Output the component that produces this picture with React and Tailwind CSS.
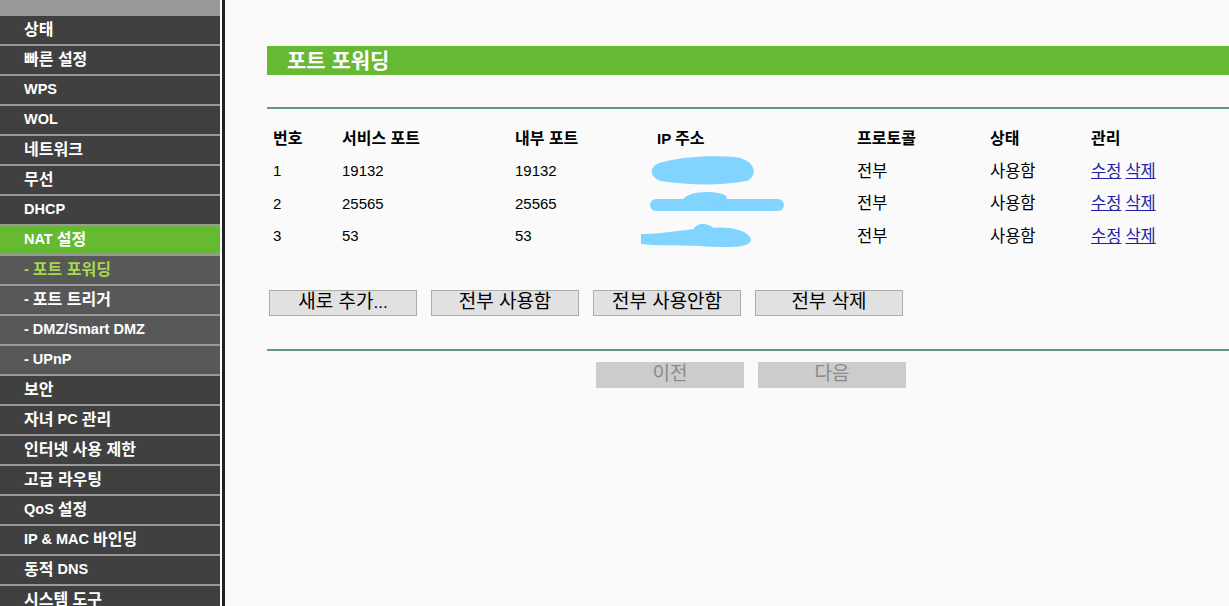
import React from 'react';

const menu = [
  { label: '상태' },
  { label: '빠른 설정' },
  { label: 'WPS' },
  { label: 'WOL' },
  { label: '네트워크' },
  { label: '무선' },
  { label: 'DHCP' },
  { label: 'NAT 설정', active: true },
  { label: '- 포트 포워딩', sub: true, current: true },
  { label: '- 포트 트리거', sub: true },
  { label: '- DMZ/Smart DMZ', sub: true },
  { label: '- UPnP', sub: true },
  { label: '보안' },
  { label: '자녀 PC 관리' },
  { label: '인터넷 사용 제한' },
  { label: '고급 라우팅' },
  { label: 'QoS 설정' },
  { label: 'IP & MAC 바인딩' },
  { label: '동적 DNS' },
  { label: '시스템 도구' },
];

const rows = [
  { no: 1, svc: '19132', inner: '19132' },
  { no: 2, svc: '25565', inner: '25565' },
  { no: 3, svc: '53', inner: '53' },
];

const font = { fontFamily: '"Liberation Sans", "Noto Sans CJK KR", sans-serif' };

// hangul in the original font runs wider than Noto's, so bump just those runs
function K({ children, cls }) {
  const parts = String(children).split(/([\uAC00-\uD7A3]+(?:\s+[\uAC00-\uD7A3]+)*)/);
  return parts.map((p, i) =>
    /[\uAC00-\uD7A3]/.test(p) ? (
      <span key={i} className={cls}>
        {p}
      </span>
    ) : (
      p
    )
  );
}

function Blob({ n }) {
  // redaction scribble over the IP address
  if (n === 1)
    return (
      <svg className="absolute left-[-8px] top-[-16px]" width="110" height="32" viewBox="0 0 110 32">
        <path d="M10 8 C30 2 60 0 85 2 C106 4 110 20 98 26 C70 31 40 30 12 26 C0 22 0 12 10 8 Z" fill="#80d4ff" />
      </svg>
    );
  if (n === 2)
    return (
      <svg className="absolute left-[-9px] top-[-14px]" width="140" height="28" viewBox="0 0 140 28">
        <path d="M8 15 L130 15" stroke="#80d4ff" strokeWidth="12" strokeLinecap="round" />
        <path d="M34 12 C36 0 70 0 78 6 C84 16 60 24 40 20 Z" fill="#80d4ff" />
      </svg>
    );
  return (
    <svg className="absolute left-[-18px] top-[-14px]" width="120" height="28" viewBox="0 0 120 28">
      <path d="M2 12 C30 12 50 6 70 6 C92 4 108 8 112 17 C113 26 90 26 60 24 C35 23 15 24 2 22 Z" fill="#80d4ff" />
      <path d="M54 8 C58 -1 72 1 76 8 Z" fill="#80d4ff" />
    </svg>
  );
}

export default function App() {
  return (
    <div className="flex h-[606px] w-[1229px] overflow-hidden bg-[#fafafa]" style={font}>
      <div className="w-[220px] shrink-0 bg-[#999999] flex flex-col">
        <div className="h-[16px] shrink-0" />
        {menu.map((m) => (
          <div
            key={m.label}
            className={
              'h-[28px] shrink-0 mb-[2px] flex items-center pl-[24px] text-[14.5px] font-bold whitespace-pre ' +
              (m.active
                ? 'bg-[#66b933] text-white'
                : m.sub
                ? 'bg-[#585858] ' + (m.current ? 'text-[#a6d74c]' : 'text-white')
                : 'bg-[#404040] text-white')
            }
          >
            <K cls="text-[16px]">{m.label}</K>
          </div>
        ))}
      </div>
      <div className="w-[2px] shrink-0 bg-white" />
      <div className="w-[3px] shrink-0 bg-[#222222]" />

      <div className="flex-1 pl-[42px] pt-[46px] min-w-0">
        <div className="h-[29px] bg-[#66b933] flex items-center pl-[20px] text-[21px] font-bold text-white">
          포트 포워딩
        </div>
        <div className="mt-[32px] h-[2px] bg-[#5f9c7a]" />

        <div className="mt-[13px] pl-[6px] text-[15px] text-black">
          <div className="grid grid-cols-[69px_173px_142px_200px_133px_101px_1fr] h-[33px] items-center font-bold">
            <div><K cls="text-[16px]">번호</K></div>
            <div><K cls="text-[16px]">서비스 포트</K></div>
            <div><K cls="text-[16px]">내부 포트</K></div>
            <div>IP <K cls="text-[16px]">주소</K></div>
            <div><K cls="text-[16px]">프로토콜</K></div>
            <div><K cls="text-[16px]">상태</K></div>
            <div><K cls="text-[16px]">관리</K></div>
          </div>
          {rows.map((r) => (
            <div
              key={r.no}
              className="grid grid-cols-[69px_173px_142px_200px_133px_101px_1fr] h-[32.5px] items-center"
            >
              <div>{r.no}</div>
              <div>{r.svc}</div>
              <div>{r.inner}</div>
              <div className="relative h-full">
                <div className="absolute left-0 top-1/2">
                  <Blob n={r.no} />
                </div>
              </div>
              <div className="text-[16.5px]">전부</div>
              <div className="text-[16.5px]">사용함</div>
              <div className="flex gap-[4px] text-[16.5px] text-[#1f1fa8]">
                <span className="underline">수정</span>
                <span className="underline">삭제</span>
              </div>
            </div>
          ))}
        </div>

        <div className="mt-[37px] pl-[2px] flex gap-[14px]">
          {['새로 추가...', '전부 사용함', '전부 사용안함', '전부 삭제'].map((b) => (
            <div
              key={b}
              className="w-[148px] h-[26px] bg-[#e1e1e1] border border-[#adadad] flex items-center justify-center text-[17px] text-black"
            >
              <K cls="text-[19px]">{b}</K>
            </div>
          ))}
        </div>

        <div className="mt-[33px] h-[2px] bg-[#5f9c7a]" />

        <div className="mt-[11px] pl-[329px] flex gap-[14px]">
          {['이전', '다음'].map((b) => (
            <div
              key={b}
              className="w-[148px] h-[26px] bg-[#cccccc] flex items-center justify-center text-[19px] text-[#8a8a8a]"
            >
              {b}
            </div>
          ))}
        </div>
      </div>
    </div>
  );
}
